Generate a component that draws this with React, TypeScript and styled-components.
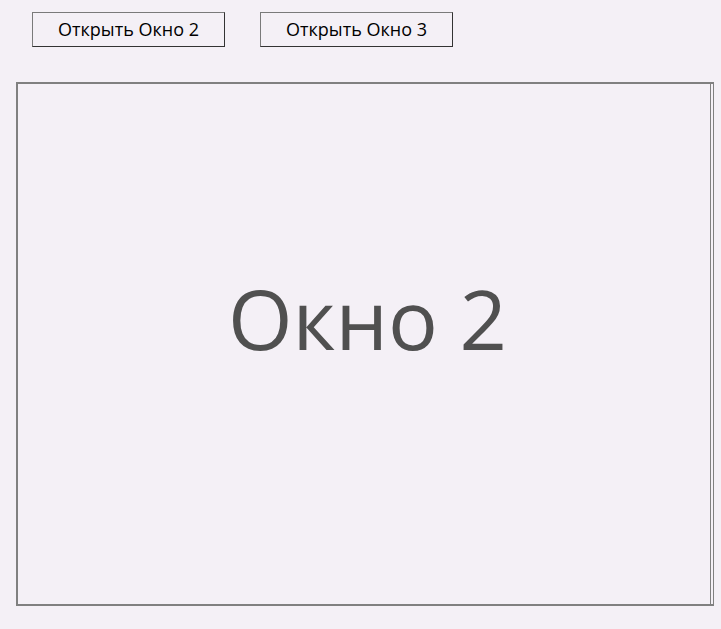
import React from "react";
import styled, { createGlobalStyle } from "styled-components";

const Global = createGlobalStyle`
  html, body {
    margin: 0;
    padding: 0;
    background: #f4f0f6;
  }
  body {
    font-family: "Open Sans", "Noto Sans", "DejaVu Sans", sans-serif;
  }
`;

const Page = styled.div`
  display: flex;
  flex-direction: column;
  padding: 12px 7px 0 16px;
`;

const Toolbar = styled.div`
  display: flex;
  gap: 35px;
  padding-left: 16px;
`;

const Button = styled.button`
  box-sizing: border-box;
  width: 193px;
  height: 35px;
  padding: 0 0 1px;
  background: #f4f0f6;
  border-style: solid;
  border-width: 1px;
  border-color: #7a7a7a #333333 #333333 #7a7a7a;
  color: #000000;
  font-family: "Open Sans", "Noto Sans", sans-serif;
  font-size: 18px;
  cursor: pointer;
`;

const Panel = styled.div`
  box-sizing: border-box;
  margin-top: 35px;
  height: 524px;
  border-style: solid;
  border-color: #808080;
  border-width: 2px 1px 2px 2px;
  display: flex;
`;

const Inner = styled.div`
  flex: 1;
  margin-right: 2px;
  border-right: 1px solid #808080;
  display: flex;
  align-items: center;
  justify-content: center;
  padding-bottom: 54px;
  padding-left: 7px;
`;

const Title = styled.div`
  font-family: "Open Sans", "Noto Sans", sans-serif;
  font-size: 83px;
  color: #505050;
  line-height: 1;
`;

export default function App() {
  return (
    <>
      <Global />
      <Page>
        <Toolbar>
          <Button>Открыть Окно 2</Button>
          <Button>Открыть Окно 3</Button>
        </Toolbar>
        <Panel>
          <Inner>
            <Title>Окно 2</Title>
          </Inner>
        </Panel>
      </Page>
    </>
  );
}
